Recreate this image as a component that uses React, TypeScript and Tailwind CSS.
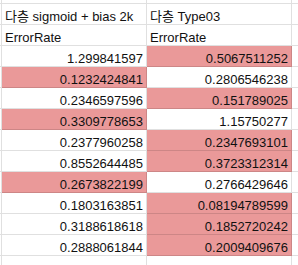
const rows: { a: string; aRed: boolean; b: string; bRed: boolean }[] = [
  { a: '1.299841597', aRed: false, b: '0.5067511252', bRed: true },
  { a: '0.1232424841', aRed: true, b: '0.2806546238', bRed: false },
  { a: '0.2346597596', aRed: false, b: '0.151789025', bRed: true },
  { a: '0.3309778653', aRed: true, b: '1.15750277', bRed: false },
  { a: '0.2377960258', aRed: false, b: '0.2347693101', bRed: true },
  { a: '0.8552644485', aRed: false, b: '0.3723312314', bRed: true },
  { a: '0.2673822199', aRed: true, b: '0.2766429646', bRed: false },
  { a: '0.1803163851', aRed: false, b: '0.08194789599', bRed: true },
  { a: '0.3188618618', aRed: false, b: '0.1852720242', bRed: true },
  { a: '0.2888061844', aRed: false, b: '0.2009409676', bRed: true },
]

function Cell({ text, red, right }: { text: string; red?: boolean; right?: boolean }) {
  return (
    <div
      className={
        'w-[145px] h-[21px] shrink-0 flex items-end border-r border-b border-black/[0.12] px-[3px] leading-[15px] ' +
        (red ? 'bg-[#ea9999] ' : 'bg-white ') +
        (right ? 'justify-end' : 'justify-start')
      }
    >
      <span className="whitespace-nowrap">{text}</span>
    </div>
  )
}

function Row({ children }: { children: React.ReactNode }) {
  return (
    <div className="flex">
      {/* 앞쪽 잘린 열 */}
      <div className="w-[2px] h-[21px] shrink-0 border-r border-b border-black/[0.12]" />
      {children}
      <div className="flex-1 h-[21px] border-b border-black/[0.12]" />
    </div>
  )
}

export default function App() {
  return (
    <div
      className="w-[298px] h-[265px] overflow-hidden bg-white text-[13px] text-[#111]"
      style={{ fontFamily: '"Liberation Sans", Arial, "Noto Sans CJK KR", sans-serif' }}
    >
      {/* 위쪽 잘린 행 */}
      <div className="flex">
        <div className="w-[2px] h-[4px] shrink-0 border-r border-b border-black/[0.12]" />
        <div className="w-[145px] h-[4px] shrink-0 border-r border-b border-black/[0.12]" />
        <div className="w-[145px] h-[4px] shrink-0 border-r border-b border-black/[0.12]" />
        <div className="flex-1 h-[4px] border-b border-black/[0.12]" />
      </div>
      <Row>
        <Cell text="다층 sigmoid + bias 2k" />
        <Cell text="다층 Type03" />
      </Row>
      <Row>
        <Cell text="ErrorRate" />
        <Cell text="ErrorRate" />
      </Row>
      {rows.map((r, i) => (
        <Row key={i}>
          <Cell text={r.a} red={r.aRed} right />
          <Cell text={r.b} red={r.bRed} right />
        </Row>
      ))}
      <Row>
        <div className="w-[145px] h-[21px] shrink-0 border-r border-b border-black/[0.12]" />
        <div className="w-[145px] h-[21px] shrink-0 border-r border-b border-black/[0.12]" />
      </Row>
    </div>
  )
}
